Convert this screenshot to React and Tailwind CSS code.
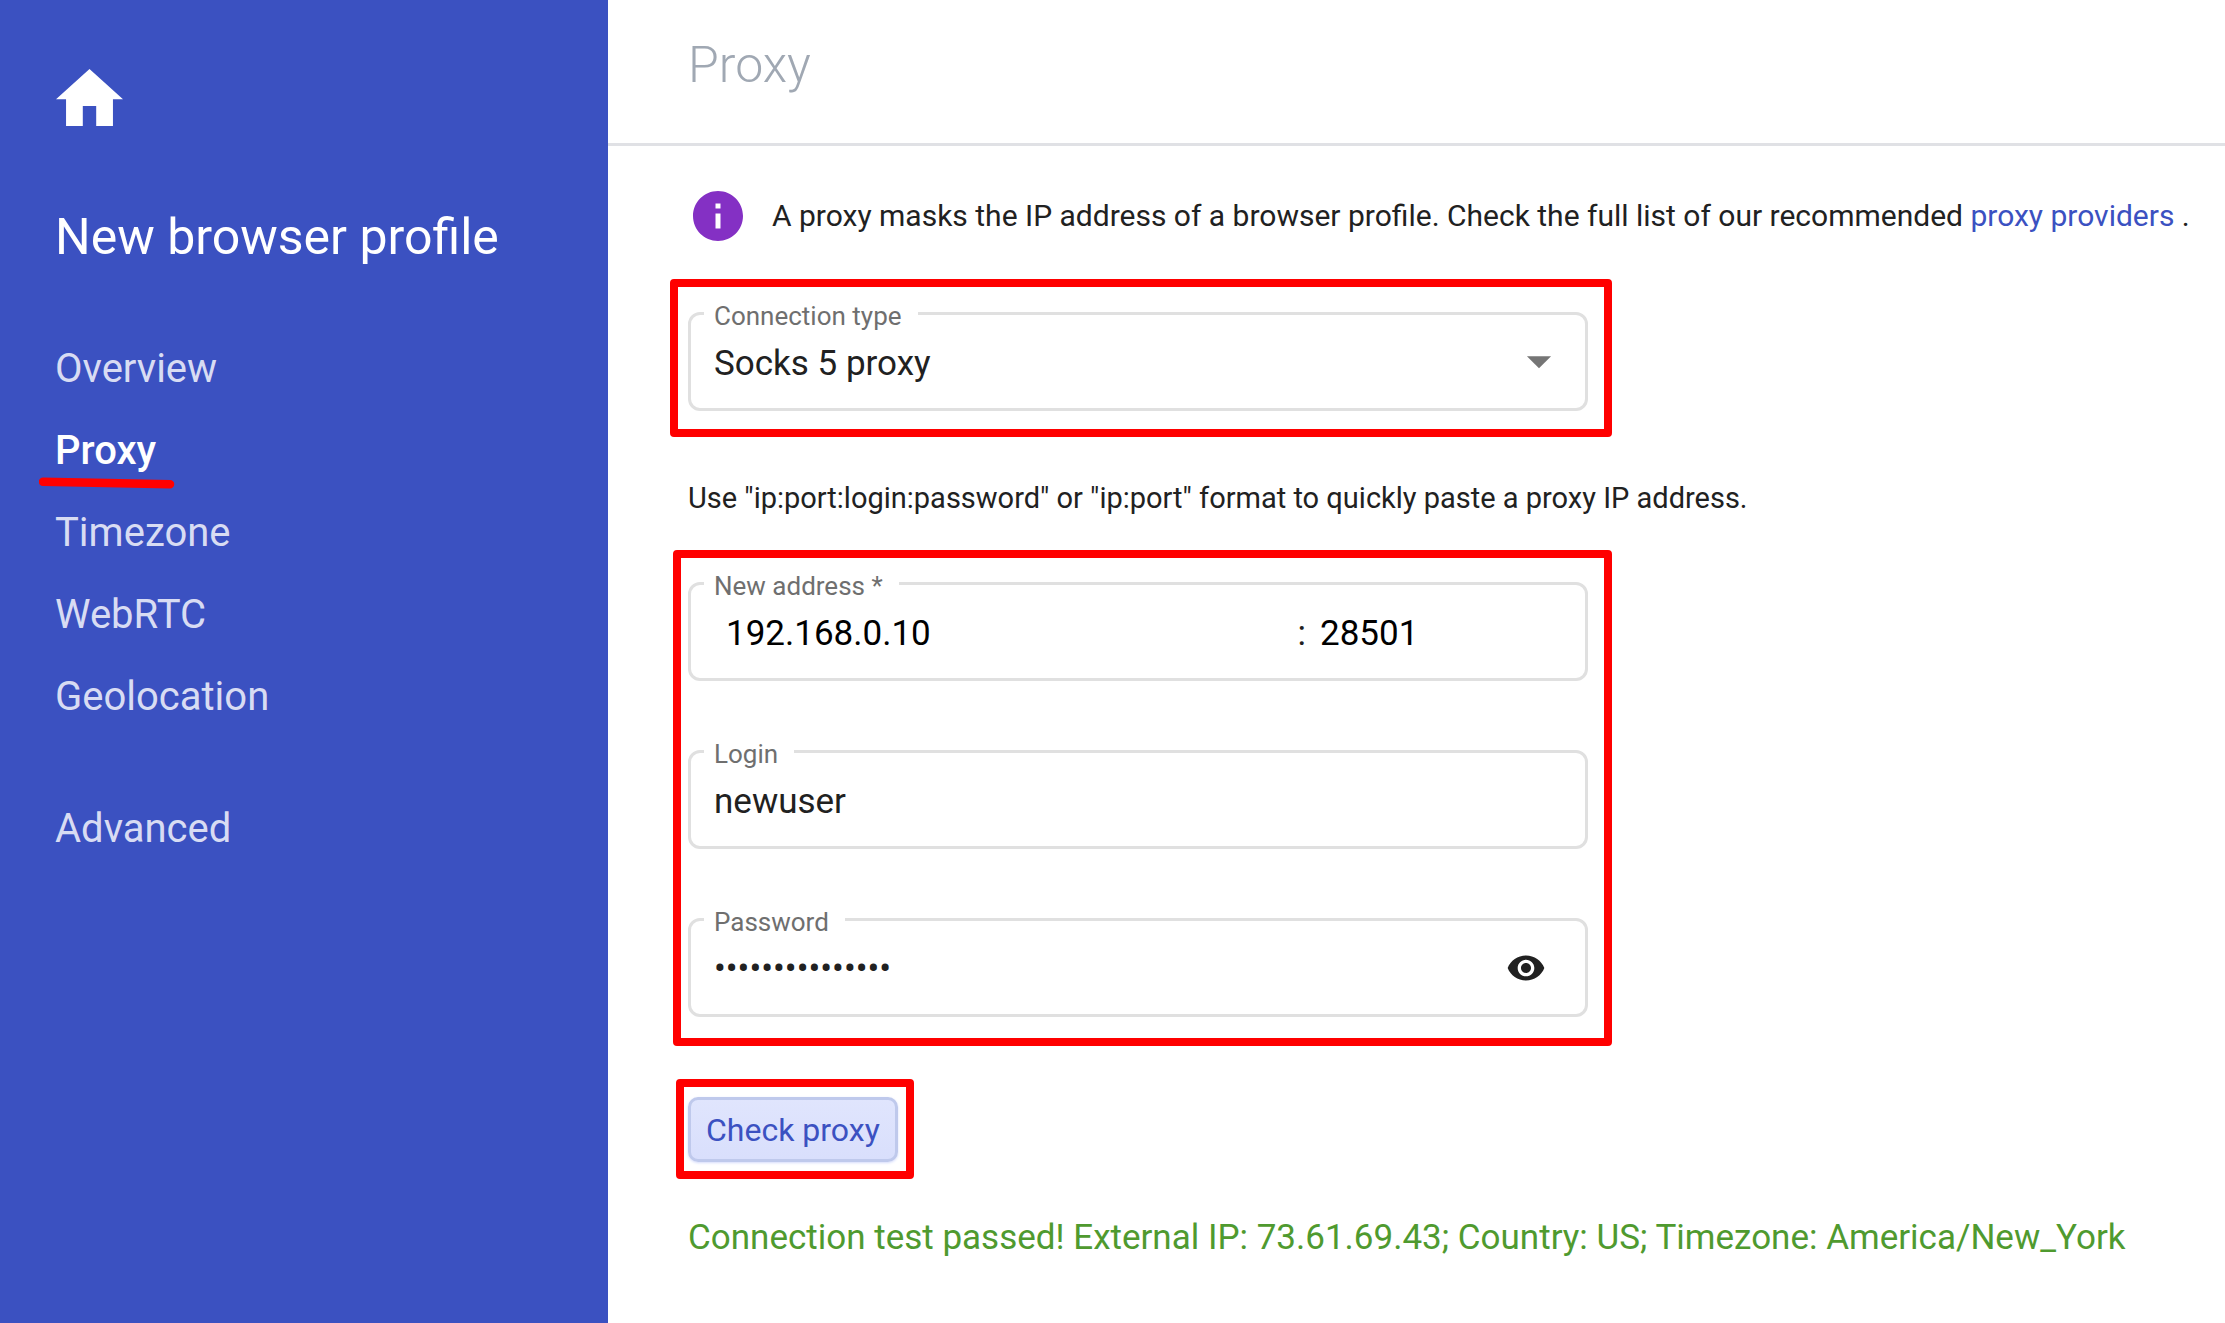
import { useState } from 'react';
import { MdInfo, MdVisibility, MdArrowDropDown } from 'react-icons/md';

const navItems = [
    { href: '#overview', label: 'Overview' },
    { href: '#proxy', label: 'Proxy', active: true },
    { href: '#timezone', label: 'Timezone' },
    { href: '#webrtc', label: 'WebRTC' },
    { href: '#geolocation', label: 'Geolocation' },
];

const linkClass = 'text-[40px] leading-[82px] text-[#d8dcf3] hover:text-white';

function Highlight({ className }) {
    return <div aria-hidden="true" className={`absolute border-8 border-[#ff0000] rounded-[4px] pointer-events-none ${className}`} />;
}

function Field({ id, label, children }) {
    return (
        <div className="relative flex items-stretch h-[99px] w-full border-3 border-[#e0e0e0] rounded-xl text-[35px] text-[#212121]">
            <label htmlFor={id} className="absolute left-[13px] -top-[14px] pl-[10px] pr-4 bg-white text-[26px] leading-[30px] text-[#6f6f6f]">
                {label}
            </label>
            {children}
        </div>
    );
}

function Sidebar() {
    return (
        <aside className="w-[608px] shrink-0 bg-[#3b51c1] pt-[69px] pl-[55px]">
            <a href="#home" aria-label="Home" className="block w-fit pl-px">
                <svg viewBox="2 3 20 17" className="block w-[67px] h-[57px]" fill="#fff">
                    <path d="M10 20v-6h4v6h5v-8h3L12 3 2 12h3v8z" />
                </svg>
            </a>
            <h2 className="mt-[81px] text-[50px] leading-[60px] text-white">New browser profile</h2>

            <nav className="mt-[61px] flex flex-col items-start">
                {navItems.map(item => (
                    item.active ? (
                        <a key={item.href} href={item.href} aria-current="page" className="relative text-[40px] leading-[82px] font-medium text-white">
                            {item.label}
                            <svg viewBox="0 0 136 12" className="absolute -left-4 bottom-[3px] w-[136px] h-3 max-w-none" aria-hidden="true">
                                <path d="M4 4.7L131 7.2" stroke="#ff0000" strokeWidth="8.5" strokeLinecap="round" />
                            </svg>
                        </a>
                    ) : (
                        <a key={item.href} href={item.href} className={linkClass}>{item.label}</a>
                    )
                ))}
                <a href="#advanced" className={`mt-[50px] ${linkClass}`}>Advanced</a>
            </nav>
        </aside>
    );
}

export default function App() {
    const [type, setType] = useState('socks5');
    const [host, setHost] = useState('192.168.0.10');
    const [port, setPort] = useState('28501');
    const [login, setLogin] = useState('newuser');
    const [password, setPassword] = useState('proxypassword15');
    const [visible, setVisible] = useState(false);

    return (
        <div className="flex min-h-screen bg-white font-[Roboto,sans-serif]">
            <Sidebar />

            <div className="flex-1 min-w-0">
                <header className="h-[146px] border-b-3 border-[#e0e1e5] pl-20 pt-[35px]">
                    <h1 className="text-[50px] leading-[60px] font-light text-[#a0a8b3]">Proxy</h1>
                </header>

                <main className="pl-20 pt-10">
                    <div className="flex items-center gap-6">
                        <MdInfo size={60} className="shrink-0 text-[#8430c4]" />
                        <p className="text-[30px] leading-[40px] text-[#212121]">
                            A proxy masks the IP address of a browser profile. Check the full list of our recommended{' '}
                            <a href="#providers" className="text-[#3b51c1]">proxy providers</a> .
                        </p>
                    </div>

                    <div className="relative mt-[66px] max-w-[900px]">
                        <Field id="type" label="Connection type">
                            <select id="type" value={type} onChange={e => setType(e.target.value)} className="appearance-none flex-1 min-w-0 pl-[23px] pt-1.5 outline-none bg-transparent">
                                <option value="socks5">Socks 5 proxy</option>
                                <option value="http">HTTP proxy</option>
                            </select>
                            <MdArrowDropDown size={58} className="absolute right-[17px] top-[17px] text-[#757575] pointer-events-none" />
                        </Field>
                        <Highlight className="-left-[18px] -right-6 -top-[33px] -bottom-[26px]" />
                    </div>

                    <p className="mt-[67px] text-[29px] leading-[40px] text-[#212121]">
                        Use "ip:port:login:password" or "ip:port" format to quickly paste a proxy IP address.
                    </p>

                    <div className="relative mt-16 max-w-[900px] flex flex-col gap-[69px]">
                        <Field id="host" label="New address *">
                            <input id="host" value={host} onChange={e => setHost(e.target.value)} className="flex-1 min-w-0 pl-[35px] pt-1.5 text-black outline-none" />
                            <span className="self-center pt-1.5">:</span>
                            <input aria-label="Port" value={port} onChange={e => setPort(e.target.value)} className="w-[279px] pl-[14px] pt-1.5 text-black outline-none" />
                        </Field>
                        <Field id="login" label="Login">
                            <input id="login" value={login} onChange={e => setLogin(e.target.value)} className="flex-1 min-w-0 pl-[23px] pt-1.5 outline-none" />
                        </Field>
                        <Field id="password" label="Password">
                            <input id="password" type={visible ? 'text' : 'password'} value={password} onChange={e => setPassword(e.target.value)} className="flex-1 min-w-0 pl-[23px] pt-1 outline-none" />
                            <button type="button" aria-label="Show password" onClick={() => setVisible(!visible)} className="mr-[39px]">
                                <MdVisibility size={40} />
                            </button>
                        </Field>
                        <Highlight className="-left-[15px] -right-6 -top-8 -bottom-[29px]" />
                    </div>

                    <div className="relative mt-20 w-fit">
                        <button type="button" className="block h-[65px] px-[15px] border-3 border-[#bfc9ec] rounded-[10px] bg-linear-to-b from-[#e0e5fd] to-[#d9dffc] text-[32px] text-[#3b51c1] shadow-sm shadow-[#d9dffc]">
                            Check proxy
                        </button>
                        <Highlight className="-left-3 -right-4 -top-[18px] -bottom-[17px]" />
                    </div>

                    <p className="mt-[52px] text-[35px] leading-[48px] text-[#4f9a2f]">
                        Connection test passed! External IP: 73.61.69.43; Country: US; Timezone: America/New_York
                    </p>
                </main>
            </div>
        </div>
    );
}
